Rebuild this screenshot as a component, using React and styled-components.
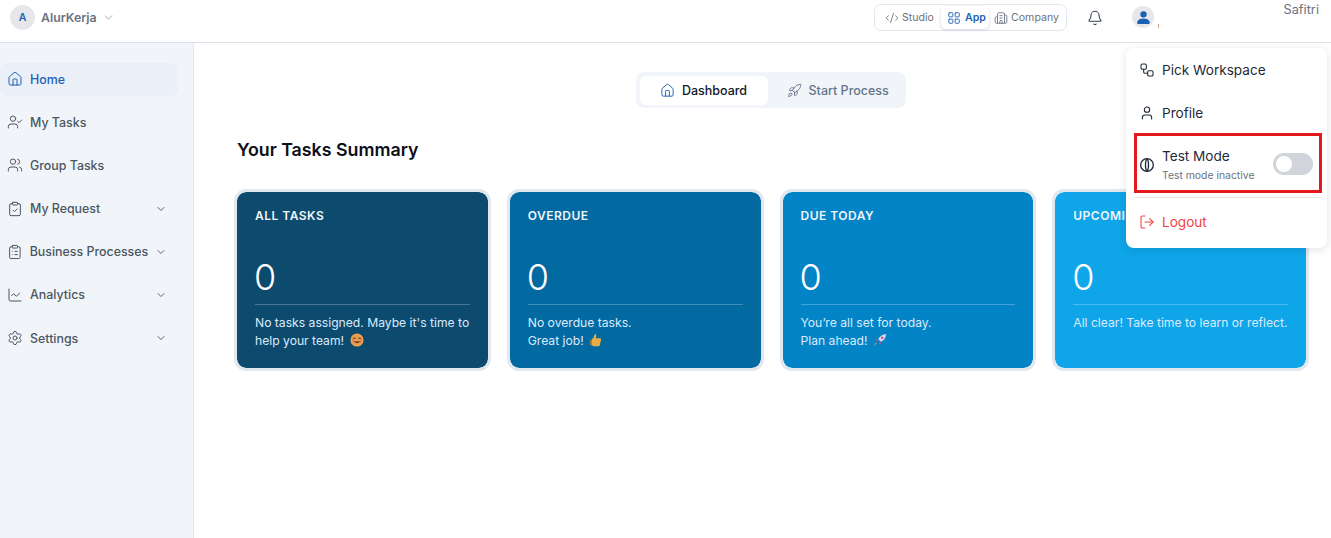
import React from 'react'
import styled, { createGlobalStyle } from 'styled-components'
import {
  Bell, Building2, ChartLine, ChevronDown, ClipboardCheck, ClipboardList, CodeXml, House,
  LayoutGrid, LogOut, Rocket, Settings, User, UserCheck, Users, Workflow,
} from 'lucide-react'
import { BsPersonFill } from 'react-icons/bs'

const GlobalStyle = createGlobalStyle`
  html, body { margin: 0; padding: 0; height: 100%; background: #ffffff; }
  body { font-family: Inter, "Liberation Sans", sans-serif; overflow: hidden; }
  * { box-sizing: border-box; }
`

const Page = styled.div`
  position: relative;
  width: 1331px;
  height: 538px;
  display: flex;
  flex-direction: column;
  overflow: hidden;
`
const Header = styled.header`
  height: 43px;
  flex: none;
  display: flex;
  align-items: flex-start;
  border-bottom: 1px solid #dbe1ea;
  padding: 4px 12px 0 10px;
`
const Brand = styled.div`
  display: flex;
  align-items: center;
  gap: 5px;
  color: #6b7280;
  font-size: 12.3px;
  font-weight: 600;
  height: 26px;
`
const BrandAvatar = styled.div`
  width: 25px;
  height: 25px;
  margin-right: 1px;
  border-radius: 50%;
  background: #e5e7eb;
  color: #1d5fb4;
  font-size: 10.5px;
  font-weight: 600;
  display: flex;
  align-items: center;
  justify-content: center;
`
const BrandChevron = styled(ChevronDown)`
  color: #8b93a1;
`
const Switcher = styled.div`
  margin-left: auto;
  height: 27px;
  width: 193px;
  border: 1px solid #e2e8f0;
  border-radius: 7px;
  display: flex;
  align-items: center;
  padding: 0 7px 0 10px;
`
const SwitchItem = styled.div`
  display: flex;
  align-items: center;
  gap: ${p => (p.$active ? '4px' : '3px')};
  height: 23px;
  font-size: 10.6px;
  font-weight: ${p => (p.$active ? 600 : 400)};
  color: ${p => (p.$active ? '#1d5fb4' : '#6b7280')};
  background: ${p => (p.$active ? '#ffffff' : 'transparent')};
  border-radius: 5px;
  padding: ${p => (p.$active ? '0 0 0 6px' : '0')};
  width: ${p => (p.$active ? '49px' : 'auto')};
  margin: ${p => (p.$active ? '0 5px 0 7px' : '0')};
  box-shadow: ${p => (p.$active ? '0 1px 3px rgba(15, 23, 42, 0.18)' : 'none')};
`
const BellButton = styled.div`
  margin-left: 20px;
  width: 16px;
  height: 27px;
  display: flex;
  align-items: center;
  color: #374151;
`
const UserGroup = styled.div`
  display: flex;
  align-items: flex-start;
  width: 216px;
`
const UserAvatar = styled.div`
  margin-left: 29px;
  margin-top: 2px;
  width: 22px;
  height: 22px;
  border-radius: 50%;
  background: #e5e7eb;
  color: #1d5fb4;
  display: flex;
  align-items: center;
  justify-content: center;
`
const Tick = styled.span`
  width: 1px;
  height: 4px;
  margin: 20px 0 0 4px;
  background: #c9a48f;
`
const UserName = styled.div`
  margin-left: auto;
  font-size: 12.8px;
  color: #6b7280;
  line-height: 12px;
`
const Body = styled.div`
  flex: 1;
  display: flex;
  min-height: 0;
`
const Sidebar = styled.aside`
  width: 194px;
  flex: none;
  background: #f1f5f9;
  border-right: 1px solid #e2e8f0;
  padding: 19.5px 15px 0 0;
  display: flex;
  flex-direction: column;
  gap: 10.2px;
`
const NavItem = styled.div`
  height: 33px;
  display: flex;
  align-items: center;
  gap: 7px;
  padding: 0 11px 0 7px;
  border-radius: 8px;
  font-size: 12.4px;
  font-weight: 500;
  color: ${p => (p.$active ? '#1d5fb4' : '#4b5563')};
  background: ${p => (p.$active ? '#ebf0f8' : 'transparent')};
`
const NavLabel = styled.span`
  flex: 1;
  white-space: nowrap;
`
const Main = styled.main`
  flex: 1;
  min-width: 0;
  padding: 29px 22px 0 40px;
`
const TabsRow = styled.div`
  display: flex;
  justify-content: center;
  padding-right: 2px;
`
const Tabs = styled.div`
  width: 270px;
  height: 36px;
  padding: 4px;
  background: #f1f5f9;
  border-radius: 8px;
  display: flex;
  align-items: center;
`
const Tab = styled.div`
  height: 29px;
  width: ${p => (p.$active ? '128px' : 'auto')};
  display: flex;
  align-items: center;
  justify-content: center;
  gap: 7px;
  padding-left: ${p => (p.$active ? '0' : '19px')};
  border-radius: 6px;
  font-size: 12.5px;
  font-weight: 500;
  color: ${p => (p.$active ? '#0f172a' : '#64748b')};
  background: ${p => (p.$active ? '#ffffff' : 'transparent')};
`
const Title = styled.h2`
  margin: 31px 0 28px 3px;
  font-size: 17.8px;
  line-height: 22px;
  font-weight: 600;
  color: #0b0f19;
`
const Cards = styled.div`
  display: grid;
  grid-template-columns: repeat(4, 1fr);
  gap: 16px;
`
const Card = styled.section`
  height: 182px;
  border: 3px solid #e2e8f0;
  border-radius: 12px;
  background: ${p => p.$bg};
  background-clip: padding-box;
  padding: 17px 18px 0;
  color: #ffffff;
`
const CardTitle = styled.div`
  font-size: 12px;
  line-height: 14px;
  font-weight: 600;
  letter-spacing: 0.5px;
  white-space: nowrap;
  color: #f1f5f9;
`
const CardValue = styled.div`
  margin-top: 33px;
  height: 42px;
  font-size: 36px;
  line-height: 42px;
  font-weight: 300;
  margin-left: -1px;
`
const CardDivider = styled.div`
  margin-top: 6px;
  height: 1px;
  background: rgba(255, 255, 255, 0.25);
`
const CardText = styled.p`
  margin: 9px 0 0;
  font-size: 12.15px;
  line-height: 18px;
  color: #dbeafe;
  white-space: nowrap;
`
const Emoji = styled.svg`
  width: 14px;
  height: 14px;
  margin-left: 2px;
  vertical-align: -2px;
`
const Menu = styled.div`
  position: absolute;
  top: 48px;
  left: 1126px;
  width: 201px;
  height: 200px;
  background: #ffffff;
  border-radius: 8px;
  box-shadow: 0 2px 8px rgba(15, 23, 42, 0.12);
  padding: 0 5px 0 8px;
`
const MenuItem = styled.div`
  height: 43px;
  margin-top: ${p => (p.$danger ? '2px' : '0')};
  display: flex;
  align-items: center;
  gap: 7px;
  padding-left: 5px;
  font-size: 13.6px;
  color: ${p => (p.$danger ? '#ef4444' : '#1f2937')};
`
const TestRow = styled.div`
  height: 60px;
  margin: -1px 0 0;
  border: 3px solid #e5181e;
  display: flex;
  align-items: center;
  gap: 7px;
  padding: 4px 6px 0 2px;
`
const TestText = styled.div`
  flex: 1;
  font-size: 13.6px;
  line-height: 16px;
  color: #1f2937;
`
const TestHint = styled.div`
  margin-top: 5px;
  font-size: 10.4px;
  line-height: 14px;
  color: #6b7280;
`
const Toggle = styled.div`
  width: 40px;
  height: 22px;
  margin-top: -2px;
  border-radius: 11px;
  background: #d1d5db;
  padding: 3px;
`
const Knob = styled.div`
  width: 16px;
  height: 16px;
  border-radius: 50%;
  background: #ffffff;
`
const MenuDivider = styled.div`
  height: 1px;
  margin-top: 4px;
  background: #e5e7eb;
`

const navItems = [
  { label: 'Home', icon: House, active: true },
  { label: 'My Tasks', icon: UserCheck },
  { label: 'Group Tasks', icon: Users },
  { label: 'My Request', icon: ClipboardCheck, more: true },
  { label: 'Business Processes', icon: ClipboardList, more: true },
  { label: 'Analytics', icon: ChartLine, more: true },
  { label: 'Settings', icon: Settings, more: true },
]

const Smile = () => (
  <Emoji viewBox="0 0 16 16">
    <circle cx="8" cy="8" r="7.5" fill="#e8a04c" />
    <path d="M3.5 6.5q1.5-1.6 3 0M9.5 6.5q1.5-1.6 3 0" fill="none" stroke="#6b3d1e" strokeWidth="1.2" />
    <path d="M4 9.5q4 4.5 8 0z" fill="#7a3b22" />
    <circle cx="3.6" cy="9" r="1.3" fill="#e0736a" />
    <circle cx="12.4" cy="9" r="1.3" fill="#e0736a" />
  </Emoji>
)
const Thumb = () => (
  <Emoji viewBox="0 0 16 16">
    <path d="M6.5 1.5c1.2-.6 2 .3 1.8 1.6L8 6h4.5c1.2 0 1.6 1 1.2 1.9l-1.4 6c-.2.8-.8 1.1-1.5 1.1H6c-1.3 0-2.5-.6-3-1.2V7.5c1.8-1.5 3-3.5 3.5-6z" fill="#e9ad45" />
    <path d="M3 8H1.5v6H3z" fill="#c98a2e" />
  </Emoji>
)
const RocketEmoji = () => (
  <Emoji viewBox="0 0 16 16">
    <path d="M15 1c-4 .3-7 2-9 6l3 3c4-2 5.7-5 6-9z" fill="#d9d4e6" />
    <path d="M6 7 2.5 7.5 4.5 9.500zM9 10l-.5 3.5-2-2z" fill="#d6478f" />
    <circle cx="10.5" cy="5.5" r="1.3" fill="#c0357e" />
    <path d="M4.5 11.5 1 15l1.5-4z" fill="#e9873c" />
  </Emoji>
)

const cards = [
  { title: 'ALL TASKS', bg: '#0c4a6e', lines: ["No tasks assigned. Maybe it's time to", 'help your team!'], emoji: <Smile /> },
  { title: 'OVERDUE', bg: '#0369a1', lines: ['No overdue tasks.', 'Great job!'], emoji: <Thumb /> },
  { title: 'DUE TODAY', bg: '#0284c7', lines: ['You’re all set for today.', 'Plan ahead!'], emoji: <RocketEmoji /> },
  { title: 'UPCOMING', bg: '#0ea5e9', lines: ['All clear! Take time to learn or reflect.'] },
]

const App = () => (
  <Page>
    <GlobalStyle />
    <Header>
      <Brand>
        <BrandAvatar>A</BrandAvatar>
        AlurKerja
        <BrandChevron size={13} strokeWidth={1.5} />
      </Brand>
      <Switcher>
        <SwitchItem><CodeXml size={14} strokeWidth={1.5} />Studio</SwitchItem>
        <SwitchItem $active><LayoutGrid size={14} strokeWidth={1.5} />App</SwitchItem>
        <SwitchItem><Building2 size={14} strokeWidth={1.5} />Company</SwitchItem>
      </Switcher>
      <BellButton><Bell size={16} strokeWidth={1.6} /></BellButton>
      <UserGroup>
        <UserAvatar><BsPersonFill size={17} /></UserAvatar>
        <Tick />
        <UserName>Safitri</UserName>
      </UserGroup>
    </Header>
    <Body>
      <Sidebar>
        {navItems.map(({ label, icon: Icon, active, more }) => (
          <NavItem key={label} $active={active}>
            <Icon size={16} strokeWidth={1.5} />
            <NavLabel>{label}</NavLabel>
            {more && <ChevronDown size={12} strokeWidth={1.8} />}
          </NavItem>
        ))}
      </Sidebar>
      <Main>
        <TabsRow>
          <Tabs>
            <Tab $active><House size={15} strokeWidth={1.5} color="#1d5fb4" />Dashboard</Tab>
            <Tab><Rocket size={15} strokeWidth={1.5} />Start Process</Tab>
          </Tabs>
        </TabsRow>
        <Title>Your Tasks Summary</Title>
        <Cards>
          {cards.map(card => (
            <Card key={card.title} $bg={card.bg}>
              <CardTitle>{card.title}</CardTitle>
              <CardValue>0</CardValue>
              <CardDivider />
              <CardText>
                {card.lines.map((line, i) => (
                  <React.Fragment key={line}>
                    {i > 0 && <br />}
                    {line}
                  </React.Fragment>
                ))}
                {card.emoji && ' '}
                {card.emoji}
              </CardText>
            </Card>
          ))}
        </Cards>
      </Main>
    </Body>
    <Menu>
      <MenuItem><Workflow size={16} strokeWidth={1.6} />Pick Workspace</MenuItem>
      <MenuItem><User size={16} strokeWidth={1.6} />Profile</MenuItem>
      <TestRow>
        <svg width="16" height="16" viewBox="0 0 24 24" fill="none" stroke="#1f2937" strokeWidth="2">
          <circle cx="12" cy="12" r="9.5" />
          <path d="M12 2.5c-3 3-3 16 0 19M12 2.5c3 3 3 16 0 19" />
        </svg>
        <TestText>
          Test Mode
          <TestHint>Test mode inactive</TestHint>
        </TestText>
        <Toggle><Knob /></Toggle>
      </TestRow>
      <MenuDivider />
      <MenuItem $danger><LogOut size={16} strokeWidth={1.6} />Logout</MenuItem>
    </Menu>
  </Page>
)

export default App
